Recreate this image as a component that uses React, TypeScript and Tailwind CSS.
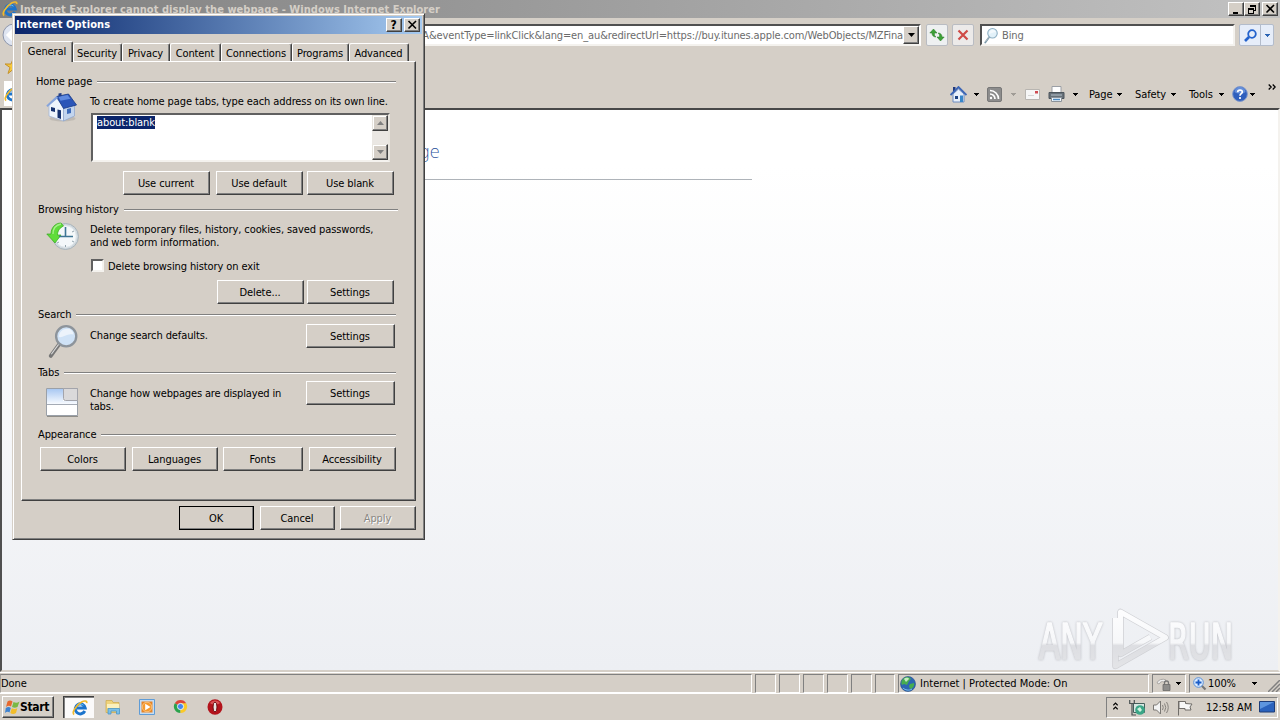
import type { ReactNode } from "react";
import clsx from "clsx";

const UI = "font-['DejaVu_Sans_Condensed','DejaVu_Sans',sans-serif] [font-stretch:condensed]";

const TABS = [
  { label: "Security", w: "w-[49px]" },
  { label: "Privacy", w: "w-[48px]" },
  { label: "Content", w: "w-[51px]" },
  { label: "Connections", w: "w-[71px]" },
  { label: "Programs", w: "w-[57px]" },
  { label: "Advanced", w: "w-[60px]" },
];

function Caret({ className = "text-black" }: { className?: string }) {
  return (
    <svg className={clsx("h-[3px] w-[5px] shrink-0", className)} viewBox="0 0 5 3" shapeRendering="crispEdges">
      <path d="M0 0h5v1H4v1H3v1H2V2H1V1H0z" fill="currentColor" />
    </svg>
  );
}

function IeIcon({ className }: { className?: string }) {
  return (
    <svg className={clsx("h-4 w-4 shrink-0", className)} viewBox="0 0 16 16" fill="none">
      <path d="M12.800 11A5 5 0 1 1 13.200 8H5" stroke="#1c74cc" strokeWidth="3" />
      <path d="M11.500 5.200A4.400 4.400 0 0 0 4.400 7" stroke="#6cc3f5" strokeWidth="1" />
      <path d="M2.200 14.600C-.8 13 4 5 9.600 2c3-1.600 5.600-1.400 5.100 1.200" stroke="#f0b92c" strokeWidth="1.700" />
    </svg>
  );
}

function HouseIcon({ className }: { className?: string }) {
  return (
    <svg className={clsx("shrink-0", className)} viewBox="0 0 32 32">
      <ellipse cx="17" cy="26.500" rx="13" ry="3" fill="#a9a69f" opacity=".5" />
      <path d="M3.500 12.500L11 6l7 9v14L3.500 24z" fill="#edf4fc" stroke="#a5b8d8" strokeWidth=".8" />
      <path d="M18 15l11-2v11l-11 5z" fill="#c3d5ee" stroke="#93a8cd" strokeWidth=".8" />
      <path d="M11 4.500l12-2.500 8 11-13 3.500z" fill="#2a55b8" stroke="#173985" strokeWidth=".8" />
      <path d="M13 4.800l9-1.700 3 3.600-10 2z" fill="#5f8ae0" />
      <path d="M.800 13.500L11 4l1.500 2-10.500 9z" fill="#86a4db" />
      <path d="M13 1.500l3-.5v3l-3 .6z" fill="#243f86" />
      <path d="M5.500 15l4 1v4l-4-1zM12 17.500l3.500.800V27l-3.500-1.200z" fill="#16326f" />
      <path d="M21.500 17l4-1v5l-4 1z" fill="#3e6cbb" />
    </svg>
  );
}

function HistoryIcon() {
  return (
    <svg className="h-8 w-[34px] shrink-0" viewBox="0 0 34 32">
      <circle cx="19.500" cy="15.500" r="13" fill="#cfd8de" stroke="#a9b4ba" />
      <circle cx="19.500" cy="15.500" r="10.800" fill="#f4f8fa" stroke="#dfe6ea" />
      <path d="M15 2C9 2 5 7 5 13H.800L9 22l6-8h-3.500c0-4 2-7 6-9z" fill="#5fdc3a" stroke="#35a81d" strokeWidth=".7" />
      <path d="M15 3c-5 1-8 5-8 10" stroke="#a5f08a" strokeWidth="1.300" fill="none" />
      <path d="M19.500 6v10M13 15.500h14" stroke="#3d7594" strokeWidth="1.600" />
      <path d="M19.500 26v-2M28 10l-2 1M28 21l-2-1M11 22l2-1" stroke="#94a5ae" />
    </svg>
  );
}

function LensIcon({ className, rim = "#8d949b", glass = "#cfe2f6", grip = "#777" }: { className?: string; rim?: string; glass?: string; grip?: string }) {
  return (
    <svg className={clsx("shrink-0", className)} viewBox="0 0 32 32" fill="none">
      <path d="M12.500 19L4.500 30" stroke={grip} strokeWidth="3.600" strokeLinecap="round" />
      <path d="M12 19L5 28.500" stroke="#dcdcdc" strokeWidth="1" />
      <circle cx="19" cy="11.500" r="9.500" fill={glass} stroke={rim} strokeWidth="2.200" />
      <path d="M12 12c3 2 8-4 14-2-1-8-13-7-14 2z" fill="#fff" opacity=".6" />
    </svg>
  );
}

function TabsIcon() {
  return (
    <svg className="h-[30px] w-8 shrink-0" viewBox="0 0 32 30">
      <defs>
        <linearGradient id="tabFill" x1="0" y1="0" x2="0" y2="1">
          <stop offset="0" stopColor="#a9c8f2" />
          <stop offset="1" stopColor="#f8fbff" />
        </linearGradient>
      </defs>
      <path d="M.500 1.500h31v27H.500z" fill="#fff" stroke="#9aa0a8" />
      <path d="M1 2h16v12h14v3H1z" fill="url(#tabFill)" />
      <path d="M17.500 1.500h14v12h-12q-2 0-2-2z" fill="#dad9da" stroke="#a3a4ab" />
      <path d="M1 17.500h30" stroke="#a5abb5" />
      <path d="M1 29.500h31" stroke="#8f8d88" />
    </svg>
  );
}

function SmallHouse() {
  return (
    <svg className="h-[17px] w-[17px] shrink-0" viewBox="0 0 17 17">
      <path d="M3 8v8h11V8L8.500 3z" fill="#e8f0fb" stroke="#6d8cc0" />
      <path d="M3 1h2.500v4L3 7z" fill="#20397e" />
      <path d="M.500 9l8-8 8 8" fill="none" stroke="#3d67b6" strokeWidth="1.800" />
      <path d="M5 10h3v3H5z" fill="#1d4282" />
      <path d="M10 9.500h3V16h-3z" fill="#3787ca" />
    </svg>
  );
}

function CaptionButton({ children, className }: { children: ReactNode; className?: string }) {
  return (
    <button className={clsx("flex h-[14px] w-4 items-center justify-center border border-t-white border-r-[#404040] border-b-[#404040] border-l-white bg-[#d5cfc7] shadow-[inset_-1px_-1px_0_#808080]", className)}>
      {children}
    </button>
  );
}

function Glyph({ children }: { children: ReactNode }) {
  return (
    <svg className="h-[10px] w-[11px]" viewBox="0 0 11 10" fill="none" stroke="#000" shapeRendering="crispEdges">
      {children}
    </svg>
  );
}

function CloseGlyph() {
  return (
    <Glyph>
      <path d="M1.500 1l7.500 7.500M9 1L1.500 8.500" strokeWidth="1.600" shapeRendering="auto" />
    </Glyph>
  );
}

function Button({ children, className }: { children: ReactNode; className?: string }) {
  return (
    <button
      className={clsx(
        "flex h-6 shrink-0 items-center justify-center border border-t-white border-r-[#404040] border-b-[#404040] border-l-white bg-[#d5cfc7] pr-px shadow-[inset_-1px_-1px_0_#808080]",
        className
      )}
    >
      {children}
    </button>
  );
}

function Heading({ children, className }: { children: ReactNode; className?: string }) {
  return (
    <div className={clsx("flex h-4 shrink-0 items-center gap-[5px]", className)}>
      <span className="shrink-0">{children}</span>
      <div className="mt-px h-[2px] flex-1 border-t border-b border-t-[#808080] border-b-white" />
    </div>
  );
}

function ScrollButton({ up }: { up?: boolean }) {
  return (
    <div className="flex h-4 w-4 items-center justify-center border border-t-[#e8e5df] border-r-[#404040] border-b-[#404040] border-l-[#e8e5df] bg-[#d5cfc7] shadow-[inset_-1px_-1px_0_#808080,inset_1px_1px_0_#fff]">
      <svg className="h-1 w-[7px]" viewBox="0 0 7 4" fill="#808080">
        <path d={up ? "M3.500 0L7 4H0z" : "M0 0h7L3.500 4z"} />
      </svg>
    </div>
  );
}

function OptionsDialog() {
  return (
    <div className="absolute top-[13px] left-3 flex h-[527px] w-[413px] flex-col border border-t-[#d5cfc7] border-r-[#404040] border-b-[#404040] border-l-[#d5cfc7] bg-[#d5cfc7] p-[2px] shadow-[inset_1px_1px_0_#fff,inset_-1px_-1px_0_#808080]">
      <div className="flex h-[18px] w-[407px] shrink-0 items-center bg-linear-to-r from-[#0a246a] to-[#a6caf0] pr-[2px] pb-px pl-px">
        <span className="flex-1 text-[11px] font-bold tracking-[0.12px] text-white">Internet Options</span>
        <CaptionButton>
          <span className="pr-px text-[12px] leading-none font-bold">?</span>
        </CaptionButton>
        <CaptionButton className="ml-[2px]"><CloseGlyph /></CaptionButton>
      </div>

      <div className="mt-[7px] ml-[6px] flex h-5 shrink-0 items-end">
        <div className="z-10 flex h-[21px] w-[52px] shrink-0 translate-y-px items-start justify-center rounded-t-[2px] border-t border-r border-l border-t-white border-r-[#404040] border-l-white bg-[#d5cfc7] pt-[3px] shadow-[inset_-1px_0_0_#808080]">
          General
        </div>
        {TABS.map((tab) => (
          <div key={tab.label} className={clsx("flex h-[18px] shrink-0 items-center justify-center rounded-t-[2px] border-t border-r border-t-white border-r-[#404040] pt-px shadow-[inset_-1px_0_0_#808080,inset_1px_0_0_#fff]", tab.w)}>
            {tab.label}
          </div>
        ))}
      </div>

      <div className="ml-[6px] flex h-[440px] w-[395px] shrink-0 flex-col border border-t-white border-r-[#404040] border-b-[#404040] border-l-white pt-[11px] shadow-[inset_-1px_-1px_0_#808080]">
        <Heading className="mr-[19px] ml-[14px]">Home page</Heading>
        <div className="flex h-[112px] pl-[23px]">
          <HouseIcon className="mt-[3px] h-8 w-[33px]" />
          <div className="ml-3 flex w-[306px] flex-col">
            <span className="mt-[6px] h-[14px] leading-[14px] whitespace-nowrap">To create home page tabs, type each address on its own line.</span>
            <div className="mt-[4px] ml-px flex h-[49px] w-[299px] border-2 border-t-[#606060] border-r-[#e8e5df] border-b-[#f4f2ee] border-l-[#606060] bg-white">
              <div className="flex-1 pt-px pl-1">
                <span className="inline-block h-[13px] bg-[#0a246a] leading-[13px] text-white">about:blank</span>
              </div>
              <div className="flex flex-col justify-between bg-[#eae7e3]">
                <ScrollButton up />
                <ScrollButton />
              </div>
            </div>
            <div className="mt-[9px] ml-[33px] flex">
              <Button className="w-[87px]">Use current</Button>
              <Button className="ml-[6px] w-[87px]">Use default</Button>
              <Button className="ml-1 w-[87px]">Use blank</Button>
            </div>
          </div>
        </div>

        <Heading className="mr-[17px] ml-4">Browsing history</Heading>
        <div className="flex h-[89px] pl-6">
          <div className="pt-1"><HistoryIcon /></div>
          <div className="ml-[10px] flex w-[306px] flex-col">
            <p className="mt-[6px] h-[26px] leading-[13px]">
              Delete temporary files, history, cookies, saved passwords,
              <br />
              and web form information.
            </p>
            <label className="mt-[9px] flex h-[15px] items-center">
              <span className="ml-px h-[13px] w-[13px] border-2 border-t-[#606060] border-r-[#f4f2ee] border-b-[#f4f2ee] border-l-[#606060] bg-white" />
              <span className="ml-1 pt-px">Delete browsing history on exit</span>
            </label>
            <div className="mt-[7px] ml-[127px] flex gap-[3px]">
              <Button className="w-[87px]">Delete...</Button>
              <Button className="w-[87px]">Settings</Button>
            </div>
          </div>
        </div>

        <Heading className="mr-[19px] ml-4">Search</Heading>
        <div className="flex h-[42px] pl-6">
          <LensIcon className="mt-[2px] h-[34px] w-[34px]" />
          <span className="mt-[7px] ml-[10px] w-[216px] leading-[14px]">Change search defaults.</span>
          <Button className="mt-[2px] w-[89px]">Settings</Button>
        </div>

        <Heading className="mr-[19px] ml-4">Tabs</Heading>
        <div className="flex h-[46px] pl-6">
          <div className="pt-[7px]"><TabsIcon /></div>
          <p className="mt-[7px] ml-3 w-[216px] leading-[13px] tracking-[-0.16px]">
            Change how webpages are displayed in
            <br />
            tabs.
          </p>
          <Button className="mt-px w-[89px]">Settings</Button>
        </div>

        <Heading className="mr-[19px] ml-4">Appearance</Heading>
        <div className="mt-[5px] ml-[18px] flex">
          <Button className="w-[86px]">Colors</Button>
          <Button className="ml-[6px] w-[86px]">Languages</Button>
          <Button className="ml-[5px] w-20">Fonts</Button>
          <Button className="ml-[6px] w-[87px]">Accessibility</Button>
        </div>
      </div>

      <div className="mt-[5px] mr-[6px] flex justify-end">
        <Button className="w-[75px] outline-1 -outline-offset-1 outline-black">OK</Button>
        <Button className="ml-[6px] w-[75px]">Cancel</Button>
        <Button className="ml-[5px] w-[76px] text-[#8b8984] [text-shadow:1px_1px_0_#fff]">Apply</Button>
      </div>
    </div>
  );
}

function AddressRow() {
  return (
    <div className="flex h-[34px] shrink-0 items-start pt-[6px]">
      <svg className="mt-[-1px] ml-[2px] h-6 w-6 shrink-0" viewBox="0 0 24 24">
        <circle cx="12" cy="12" r="11" fill="#dfe5f1" stroke="#8d96ab" />
        <path d="M12 6l-6 6 6 6M6 12h12" stroke="#fff" strokeWidth="3" fill="none" />
      </svg>
      <div className="ml-8 flex h-[22px] w-[863px] shrink-0 border-2 border-t-[#505050] border-r-white border-b-[#f4f2ee] border-l-[#505050] bg-white">
        <div className="flex min-w-0 flex-1 items-center justify-end overflow-hidden">
          <span className="text-[#6b6b6b] tracking-[-0.12px] whitespace-nowrap">
            A&amp;eventType=linkClick&amp;lang=en_au&amp;redirectUrl=https://buy.itunes.apple.com/WebObjects/MZFina
          </span>
        </div>
        <div className="flex h-[18px] w-4 items-center justify-center border border-t-white border-r-[#404040] border-b-[#404040] border-l-white bg-[#d5cfc7] shadow-[inset_-1px_-1px_0_#808080]">
          <svg className="h-1 w-[7px]" viewBox="0 0 7 4"><path d="M0 0h7L3.500 4z" /></svg>
        </div>
      </div>
      <button className="ml-[5px] flex h-[22px] w-[22px] shrink-0 items-center justify-center rounded-[2px] border border-[#b9bcc2] bg-[#eef0f1]">
        <svg className="h-4 w-4" viewBox="0 0 16 16" fill="#3da037" stroke="#267a22" strokeWidth=".5">
          <path d="M4.500 2L.800 6H3c0 2.500 1.500 4 4 4-1.500-1-1.800-2.500-1.500-4H8z" />
          <path d="M11.500 14l3.700-4H13c0-2.500-1.500-4-4-4 1.500 1 1.800 2.500 1.500 4H8z" />
        </svg>
      </button>
      <button className="ml-1 flex h-[22px] w-[22px] shrink-0 items-center justify-center rounded-[2px] border border-[#b9bcc2] bg-[#eceae9]">
        <svg className="h-3 w-3" viewBox="0 0 12 12"><path d="M1.500 1.500l9 9M10.500 1.500l-9 9" stroke="#cf4a46" strokeWidth="2.200" /></svg>
      </button>
      <div className="ml-[6px] flex h-[22px] w-[255px] shrink-0 items-center border-2 border-t-[#505050] border-r-[#f4f2ee] border-b-[#f4f2ee] border-l-[#505050] bg-white">
        <LensIcon className="ml-px h-[17px] w-[16px]" rim="#8fb0c4" glass="#e2f1f9" grip="#7997a8" />
        <span className="ml-[3px] text-[#6b6b6b]">Bing</span>
      </div>
      <div className="ml-[4px] flex h-[22px] w-[35px] shrink-0 rounded-[2px] border border-[#b3bccb] bg-[#e6edf9]">
        <div className="flex w-[21px] items-center justify-center border-r border-[#b3bccb]">
          <svg className="h-[13px] w-[13px]" viewBox="0 0 13 13" fill="none" stroke="#2362cc">
            <circle cx="8" cy="5" r="3.800" strokeWidth="1.800" />
            <path d="M5 8L1 12" strokeWidth="2.600" />
          </svg>
        </div>
        <div className="flex flex-1 items-center justify-center"><Caret className="text-[#2b64b4]" /></div>
      </div>
    </div>
  );
}

function CommandBar() {
  return (
    <div className="flex h-[30px] shrink-0 items-center pt-px pr-1">
      <div className="ml-1 h-[25px] w-4 bg-white pt-[5px]"><IeIcon /></div>
      <div className="mt-px ml-[930px] flex h-5 items-center">
        <SmallHouse />
        <Caret className="ml-[7px]" />
        <svg className="ml-2 h-[15px] w-[15px]" viewBox="0 0 15 15" fill="none" stroke="#fff">
          <rect x=".500" y=".500" width="14" height="14" rx="1.500" fill="#8c8c8c" stroke="#777" />
          <path d="M3 3.500a8.500 8.500 0 0 1 8.500 8.500M3 7a5 5 0 0 1 5 5" strokeWidth="1.700" />
          <circle cx="4" cy="11" r="1.200" fill="#fff" stroke="none" />
        </svg>
        <Caret className="ml-[9px] text-[#a09c96]" />
        <svg className="ml-[9px] h-[11px] w-[15px]" viewBox="0 0 15 11">
          <path d="M.500.500h14v10H.500z" fill="#f6f6f6" stroke="#b8b5b1" />
          <path d="M10 2h3v2.500h-3z" fill="#cf4b51" />
          <path d="M3 6.500h6" stroke="#d5d5d5" />
        </svg>
        <svg className="ml-2 h-4 w-[17px]" viewBox="0 0 17 16">
          <path d="M4 .500h9V7H4z" fill="#fff" stroke="#9b9fa5" />
          <path d="M1 6.500h15v6H1z" fill="#667078" stroke="#4c555c" />
          <path d="M3 9h11" stroke="#b8c3cc" />
          <path d="M3.500 11.500h10v4h-10z" fill="#f2f8fc" stroke="#8b9299" />
          <path d="M5 13.500h7" stroke="#4c8ac0" strokeWidth="1.500" />
        </svg>
        <Caret className="ml-[8px]" />
      </div>
      <div className="mt-px flex items-center">
        <span className="ml-[11px] w-[28px]">Page</span><Caret />
        <span className="ml-[13px] w-[36px]">Safety</span><Caret />
        <span className="ml-[13px] w-[30px]">Tools</span><Caret />
        <svg className="ml-2 h-4 w-4" viewBox="0 0 16 16">
          <circle cx="8" cy="8" r="7.400" fill="#2f5fbd" stroke="#8199cb" />
          <path d="M2.500 6A5.500 5 0 0 1 13.500 6c-3 2-8 2-11 0z" fill="#7ba3e6" opacity=".7" />
          <path d="M5.700 6.200C5.600 3.500 10.400 3.300 10.300 6c0 1.700-2.300 1.700-2.300 3.700M8 11v2" stroke="#fff" strokeWidth="1.700" fill="none" />
        </svg>
        <Caret className="ml-[2px]" />
      </div>
      <svg className="mb-[14px] ml-auto h-[6px] w-[8px]" viewBox="0 0 8 6" fill="none" stroke="#000" strokeWidth="1.300">
        <path d="M.700.500L3.200 3 .700 5.500M4.700.500L7.200 3 4.700 5.500" />
      </svg>
    </div>
  );
}

function Watermark() {
  return (
    <svg className="absolute top-[606px] left-[1024px] h-[66px] w-[256px] overflow-visible" viewBox="-10 0 256 66" fill="none">
      <defs>
        <linearGradient id="mark" gradientUnits="userSpaceOnUse" x1="0" y1="6" x2="0" y2="62">
          <stop offset="0" stopColor="#fdfdfe" />
          <stop offset=".55" stopColor="#f6f7f9" />
          <stop offset=".6" stopColor="#dddee2" />
          <stop offset="1" stopColor="#e3e4e7" />
        </linearGradient>
      </defs>
      <path d="M81.500 12v48l50-28.500L86.500 6v42l30-17" stroke="#cfd0d4" strokeWidth="6.500" strokeLinejoin="round" />
      <path d="M81.500 12v48l50-28.500L86.500 6v42l30-17" stroke="url(#mark)" strokeWidth="5" strokeLinejoin="round" />
      <g
        className="tracking-normal [filter:drop-shadow(0_0_1px_#b9bac0)]"
        fontFamily="'DejaVu Sans Condensed','DejaVu Sans',sans-serif"
        fontSize="50"
        fill="url(#mark)"
        stroke="url(#mark)"
        strokeWidth="1.600"
        strokeLinejoin="round"
      >
        <text x="5" y="53" textLength="63" lengthAdjust="spacingAndGlyphs">ANY</text>
        <text x="134" y="53" textLength="65" lengthAdjust="spacingAndGlyphs">RUN</text>
      </g>
    </svg>
  );
}

function Cell({ children, className }: { children?: ReactNode; className?: string }) {
  return (
    <div className={clsx("flex h-[19px] shrink-0 items-center border border-t-[#808080] border-r-white border-b-white border-l-[#808080]", className)}>
      {children}
    </div>
  );
}

function StatusBar() {
  return (
    <div className="flex h-[21px] shrink-0 items-start gap-[3px] border-t border-white pt-px">
      <Cell className="w-[752px] !border-l-[#a5a19b]">Done</Cell>
      {[0, 1, 2, 3, 4].map((i) => <Cell key={i} className="w-[21px]" />)}
      <Cell className="w-[20px]" />
      <Cell className="w-[251px] pl-px">
        <svg className="h-4 w-4" viewBox="0 0 16 16">
          <circle cx="8" cy="8" r="7.500" fill="#2c66b3" stroke="#244b86" strokeWidth=".6" />
          <path d="M3 3c3-3 7-2 8 0l-2 2-2 4-3-1-2 1c-1-2-1-4 1-6zM10 8l4-1c1 3-2 6-4 6l-1-3z" fill="#46ad50" />
          <path d="M4 3c2-2 5-1 5 0L6 6z" fill="#c4ecc2" />
          <path d="M3 12c2 2 6 3 9 1" stroke="#7fc4ef" fill="none" />
        </svg>
        <span className="ml-1 tracking-[0.02px]">Internet | Protected Mode: On</span>
      </Cell>
      <Cell className="w-[34px] pl-[3px]">
        <svg className="h-[14px] w-[15px]" viewBox="0 0 15 14">
          <path d="M1 6a6 5 0 0 1 9-3L8 5C6 4 4 5 3 7z" fill="#eee" stroke="#9e9b97" strokeWidth=".8" />
          <path d="M8.500 8V6a2 2 0 0 1 4 0v2" fill="none" stroke="#777" strokeWidth="1.300" />
          <path d="M7 7.500h7v6H7z" fill="#8e8d8b" stroke="#6c6b6a" strokeWidth=".8" />
        </svg>
        <Caret className="ml-[5px]" />
      </Cell>
      <Cell className="w-[92px] pl-[3px]">
        <svg className="h-[14px] w-[14px]" viewBox="0 0 14 14" fill="none">
          <path d="M8.500 8.500l4 4" stroke="#777" strokeWidth="2.200" />
          <circle cx="5.500" cy="5.500" r="4.800" fill="#dcecff" stroke="#5a90d8" />
          <path d="M5.500 2.500v6M2.500 5.500h6" stroke="#1a5cc8" strokeWidth="1.800" />
        </svg>
        <span className="ml-px w-[44px]">100%</span>
        <Caret />
        <svg className="mt-[5px] ml-[11px] h-3 w-3" viewBox="0 0 12 12" stroke="#808080" strokeWidth="1.500">
          <path d="M0 12L12 0M4 12l8-8M8 12l4-4" />
        </svg>
      </Cell>
    </div>
  );
}

function Taskbar() {
  return (
    <div className="flex h-[27px] shrink-0 items-start border-t border-white bg-[#d5cfc7] pt-[2px] pl-[2px]">
      <Button className="!h-[22px] w-[52px] !justify-start pl-[2px]">
        <svg className="h-4 w-[15px] shrink-0" viewBox="0 0 15 16">
          <path d="M2.500 2.500C4 1 6 1 7.500 2.500L6 7.500C4.500 6.500 3 6.500 1 8z" fill="#e7682d" />
          <path d="M8.500 3c2 1 4 1 6-.5l-2 5.500c-2 1-3.500 1-5.500 0z" fill="#7ab843" />
          <path d="M.800 9c2-1.200 3.500-1.200 5 0l-1.300 4.500C3 12.500 1.500 12.700 0 14z" fill="#3e83d1" />
          <path d="M6.800 9.300c2 1 3.500 1 5.500 0L11 14c-2 1.300-4 1.200-5.700 0z" fill="#f2bd2b" />
        </svg>
        <span className="text-[12px] font-bold tracking-[-0.3px]">Start</span>
      </Button>
      <div className="ml-[9px] flex h-[22px] w-[31px] items-center justify-center border-t border-l border-[#404040] bg-[#fbfafa] shadow-[inset_1px_1px_0_#808080]">
        <IeIcon className="mt-px ml-px" />
      </div>
      <svg className="mt-[3px] ml-[11px] h-4 w-4" viewBox="0 0 16 16">
        <path d="M1 1.500h6l1 2h6v10H1z" fill="#efd37c" stroke="#cda94a" strokeWidth=".7" />
        <path d="M2 5h12v4H2z" fill="#fbf0bd" />
        <path d="M3 15V9.500h11.500V15h-3v-3H6v3z" fill="#7bbfe8" stroke="#4a98c9" strokeWidth=".8" />
      </svg>
      <svg className="mt-[3px] ml-[18px] h-4 w-4" viewBox="0 0 16 16">
        <path d="M.500.500h15v15H.500z" fill="#c5dcf2" stroke="#5f9cd6" />
        <path d="M2.500 2.500h11v11h-11z" fill="#e78526" />
        <circle cx="8" cy="8" r="4.800" fill="#f59a2f" stroke="#fcd49c" strokeWidth=".7" />
        <path d="M6.200 4.800L11.500 8l-5.300 3.200z" fill="#fff" />
      </svg>
      <svg className="mt-[3px] ml-[18px] h-[15px] w-[15px]" viewBox="0 0 16 16">
        <path d="M8 8L1.900 4.500A7 7 0 0 1 14.100 4.500z" fill="#dd4437" />
        <path d="M8 8L1.900 4.500A7 7 0 0 0 8 15z" fill="#2ba24c" />
        <path d="M8 8V15A7 7 0 0 0 14.100 4.500H8z" fill="#fbc927" />
        <circle cx="8" cy="8" r="3.300" fill="#4687ee" stroke="#fff" strokeWidth=".9" />
      </svg>
      <svg className="mt-[3px] ml-[19px] h-4 w-4" viewBox="0 0 16 16">
        <ellipse cx="8" cy="8" rx="7.500" ry="7.700" fill="#b3131b" />
        <path d="M3 4C5 .5 11 .5 13 4 11 6 5 6 3 4z" fill="#ea6c6c" opacity=".7" />
        <ellipse cx="8" cy="8" rx="2" ry="5" fill="#e9e3e0" stroke="#6d0b10" />
      </svg>
      <div className="mt-px mr-[2px] ml-auto flex h-[21px] w-[172px] items-center border border-t-[#808080] border-r-white border-b-white border-l-[#808080]">
        <svg className="mb-1 ml-[6px] h-2 w-[5px]" viewBox="0 0 5 8" fill="none" stroke="#000" strokeWidth="1.200">
          <path d="M.300 3.300L2.500 1 4.700 3.300M.300 7.300L2.500 5l2.200 2.300" />
        </svg>
        <svg className="ml-[11px] h-4 w-4" viewBox="0 0 16 16">
          <path d="M4.500 3.500h11v9h-11z" fill="#d7e7e2" stroke="#45605c" />
          <circle cx="11" cy="10" r="4.800" fill="#3ba687" />
          <path d="M8 9l3-2 2 3-2 2z" fill="#d2f2df" />
          <path d="M.700 0v3.500h4.600V0M3 3.500V15h4" fill="none" stroke="#4c5354" strokeWidth="1.200" />
        </svg>
        <svg className="ml-[8px] h-[15px] w-4" viewBox="0 0 16 15" fill="none">
          <path d="M.500 5h3l4-4v13l-4-4h-3z" fill="#f3f3f3" stroke="#7a7773" />
          <path d="M9.500 5q1.500 2.500 0 5M11.500 3.500q2.500 4 0 8M13.500 2q3.500 5.500 0 11" stroke="#86827d" />
        </svg>
        <svg className="ml-2 h-4 w-4" viewBox="0 0 16 16">
          <path d="M1.500 1v14.500M2 1.500h6.500v2L15 4l-2 3 1 3H8V8.500H2z" fill="#f7f7f7" stroke="#706d69" />
        </svg>
        <span className="ml-[13px] w-[47px] whitespace-nowrap">12:58 AM</span>
        <svg className="ml-[6px] h-[14px] w-4" viewBox="0 0 16 14">
          <path d="M.500.500h15v10.500H.500z" fill="#2a62bd" stroke="#1c3c79" />
          <path d="M1 1h14L1 8z" fill="#5d95df" />
          <path d="M1 13h14" stroke="#cfd5dc" strokeWidth="1.600" />
        </svg>
      </div>
    </div>
  );
}

export default function App() {
  return (
    <div className={clsx("relative flex h-[720px] w-[1280px] flex-col overflow-hidden bg-[#d5cfc7] text-[11px] leading-[13px] tracking-[-0.1px] text-black", UI)}>
      <div className="flex h-[18px] shrink-0 items-center bg-linear-to-r from-[#808080] to-[#c2c2c2] pr-[2px] pl-[2px]">
        <IeIcon />
        <span className="ml-[2px] flex-1 text-[11px] font-bold tracking-[0.04px] text-[#d5cfc7]">
          Internet Explorer cannot display the webpage - Windows Internet Explorer
        </span>
        <CaptionButton><Glyph><path d="M2 8.500h5" strokeWidth="2" /></Glyph></CaptionButton>
        <CaptionButton>
          <Glyph>
            <path d="M3.500 3V1.500h5V6H7" />
            <path d="M3 1.500h6M1 4.500h6" strokeWidth="2" />
            <path d="M1.500 4v5h5V4" />
          </Glyph>
        </CaptionButton>
        <CaptionButton className="ml-[2px]"><CloseGlyph /></CaptionButton>
      </div>
      <AddressRow />
      <div className="flex h-[26px] shrink-0 items-center pt-px pl-[5px]">
        <svg className="h-4 w-4" viewBox="0 0 16 16"><path d="M8 1l2 5h6l-5 3.500 2 6-5-4-5 4 2-6L0 6h6z" fill="#f6c83c" stroke="#c4912a" /></svg>
      </div>
      <CommandBar />
      <div className="flex h-[564px] shrink-0 flex-col border-2 border-t-[#484848] border-r-[#f4f2ee] border-b-[#d5cfc7] border-l-[#505050] bg-linear-to-b from-white from-10% to-[#edeff3]">
        <div className="ml-[60px] w-[690px] border-b border-[#aeb3b9] pt-8 pb-4">
          <h1 className="flex w-[378px] justify-end text-[17px] leading-[21px] font-extralight tracking-normal whitespace-nowrap text-[#27509a] font-['DejaVu_Sans',sans-serif]">
            Internet Explorer cannot display the webpage
          </h1>
        </div>
      </div>
      <StatusBar />
      <Taskbar />
      <Watermark />
      <OptionsDialog />
    </div>
  );
}
